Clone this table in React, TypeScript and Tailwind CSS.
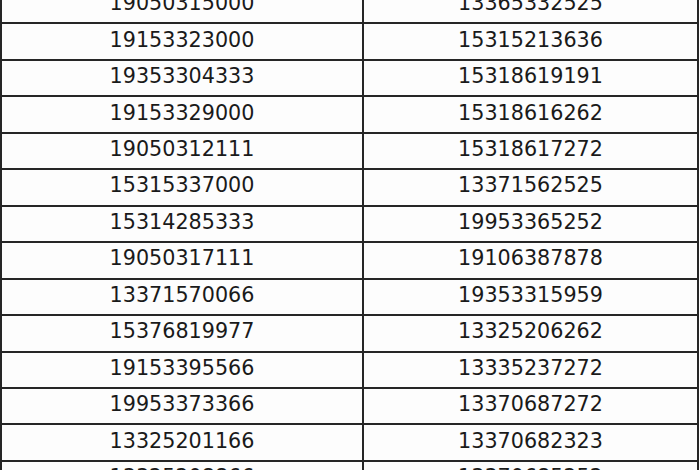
import React from "react";

const rows: [string, string][] = [
  ["19050315000", "13365332525"],
  ["19153323000", "15315213636"],
  ["19353304333", "15318619191"],
  ["19153329000", "15318616262"],
  ["19050312111", "15318617272"],
  ["15315337000", "13371562525"],
  ["15314285333", "19953365252"],
  ["19050317111", "19106387878"],
  ["13371570066", "19353315959"],
  ["15376819977", "13325206262"],
  ["19153395566", "13335237272"],
  ["19953373366", "13370687272"],
  ["13325201166", "13370682323"],
  ["13325208866", "13370685252"],
];

export default function App() {
  return (
    <div className="w-[700px] h-[470px] overflow-hidden bg-[#fdfdfd]">
      <div
        className="mt-[-12px] w-[699px] border-x-2 border-[#262626] text-[20.7px] text-[#1a1a1a]"
        style={{ fontFamily: '"DejaVu Sans", sans-serif' }}
      >
        {rows.map(([a, b], i) => (
          <div key={i} className="flex h-[36.46px] border-b-2 border-[#262626]">
            <div className="w-[362px] border-r-2 border-[#262626] flex items-center justify-center pb-[3px]">
              {a}
            </div>
            <div className="flex-1 flex items-center justify-center pb-[3px]">{b}</div>
          </div>
        ))}
      </div>
    </div>
  );
}
